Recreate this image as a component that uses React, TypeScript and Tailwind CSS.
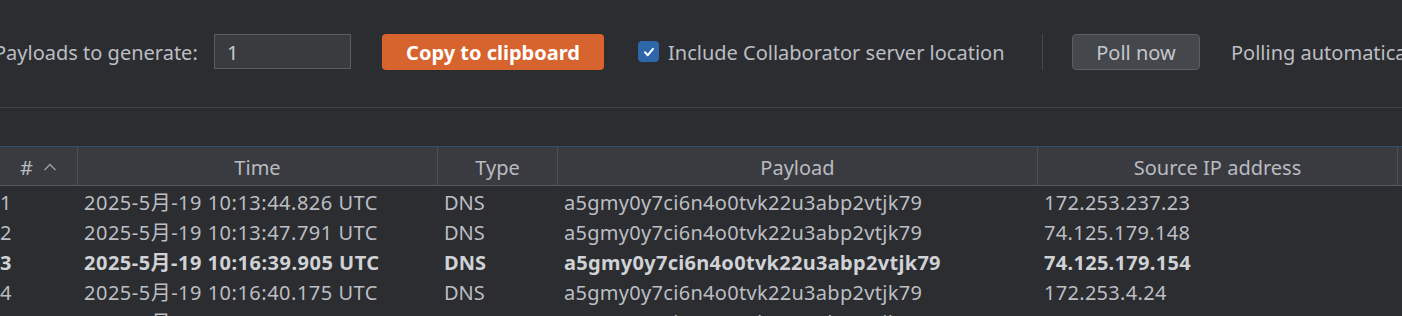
import React from "react";

const rows = [
  { n: "1", time: "2025-5月-19 10:13:44.826 UTC", type: "DNS", payload: "a5gmy0y7ci6n4o0tvk22u3abp2vtjk79", ip: "172.253.237.23", bold: false },
  { n: "2", time: "2025-5月-19 10:13:47.791 UTC", type: "DNS", payload: "a5gmy0y7ci6n4o0tvk22u3abp2vtjk79", ip: "74.125.179.148", bold: false },
  { n: "3", time: "2025-5月-19 10:16:39.905 UTC", type: "DNS", payload: "a5gmy0y7ci6n4o0tvk22u3abp2vtjk79", ip: "74.125.179.154", bold: true },
  { n: "4", time: "2025-5月-19 10:16:40.175 UTC", type: "DNS", payload: "a5gmy0y7ci6n4o0tvk22u3abp2vtjk79", ip: "172.253.4.24", bold: false },
  { n: "5", time: "2025-5月-19 10:16:40.212 UTC", type: "DNS", payload: "a5gmy0y7ci6n4o0tvk22u3abp2vtjk79", ip: "172.253.4.27", bold: false },
];

export default function App() {
  return (
    <div
      className="w-[1402px] h-[316px] overflow-hidden bg-[#2b2d30] text-[#bcbec4]"
      style={{ fontFamily: '"Noto Sans", "Noto Sans CJK SC", sans-serif' }}
    >
      <div className="ml-[-6px] w-[1800px]">
        {/* toolbar */}
        <div className="h-[108px] border-b border-[#3f4146] pt-[34px]">
          <div className="flex items-center h-[35px] text-[20px] whitespace-nowrap">
            <span className="shrink-0 w-[220px] pt-[3px]">Payloads to generate:</span>
            <div className="shrink-0 w-[137px] h-[35px] bg-[#393b3f] border border-[#5a5d62] flex items-center pl-[12px] pt-[3px] text-[#c8cacf]">
              1
            </div>
            <button className="shrink-0 ml-[31px] w-[222px] h-[36px] rounded-[4px] bg-[#d7632f] text-white font-bold text-[20px] flex items-center justify-center pt-[3px]">
              Copy to clipboard
            </button>
            <div className="shrink-0 ml-[34px] w-[21px] h-[21px] rounded-[4px] bg-[#2e67a9] flex items-center justify-center">
              <svg width="14" height="14" viewBox="0 0 14 14">
                <path d="M3 7.3 L5.8 10.2 L11 3.8" stroke="white" strokeWidth="2" fill="none" strokeLinecap="round" strokeLinejoin="round" />
              </svg>
            </div>
            <span className="shrink-0 ml-[9px] w-[340px] pt-[3px]">Include Collaborator server location</span>
            <div className="shrink-0 ml-[34px] w-px h-[36px] bg-[#44474b]" />
            <button className="shrink-0 ml-[29px] w-[128px] h-[36px] rounded-[4px] bg-[#44474c] border border-[#5c5f64] text-[#c4c6cb] text-[20px] flex items-center justify-center pt-[3px]">
              Poll now
            </button>
            <span className="shrink-0 ml-[31px] pt-[3px]">Polling automatically every 60 seconds</span>
          </div>
        </div>
        {/* table */}
        <div className="mt-[38px]">
          <div className="flex h-[40px] bg-[#393b40] border-t border-[#34506f] border-b border-b-[#55585d] text-[20px] text-[#b9bbc0]">
            <div className="shrink-0 w-[84px] flex items-center justify-center gap-[10px] pl-[6px] border-r border-[#4d5055]">
              <span className="pt-[4px]">#</span>
              <svg width="14" height="10" viewBox="0 0 14 10" className="mt-[2px]">
                <path d="M1.5 8 L7 2.5 L12.5 8" stroke="#9a9ca1" strokeWidth="1.5" fill="none" />
              </svg>
            </div>
            <div className="shrink-0 w-[360px] flex items-center justify-center pt-[4px] border-r border-[#4d5055]">Time</div>
            <div className="shrink-0 w-[120px] flex items-center justify-center pt-[4px] border-r border-[#4d5055]">Type</div>
            <div className="shrink-0 w-[480px] flex items-center justify-center pt-[4px] border-r border-[#4d5055]">Payload</div>
            <div className="shrink-0 w-[360px] flex items-center justify-center pt-[4px] border-r border-[#4d5055]">Source IP address</div>
            <div className="flex-1" />
          </div>
          {rows.map((r) => (
            <div
              key={r.n}
              className={`flex h-[30px] items-center pt-[3px] text-[20px] whitespace-nowrap ${r.bold ? "font-bold text-[#d0d2d6]" : "text-[#bcbec4]"}`}
            >
              <div className="shrink-0 w-[84px] pl-[6px]">{r.n}</div>
              <div className="shrink-0 w-[360px] pl-[6px] tracking-[0.5px]">{r.time}</div>
              <div className="shrink-0 w-[120px] pl-[6px]">{r.type}</div>
              <div className="shrink-0 w-[480px] pl-[6px] tracking-[0.3px]">{r.payload}</div>
              <div className="shrink-0 w-[360px] pl-[6px] tracking-[0.3px]">{r.ip}</div>
            </div>
          ))}
        </div>
      </div>
    </div>
  );
}
